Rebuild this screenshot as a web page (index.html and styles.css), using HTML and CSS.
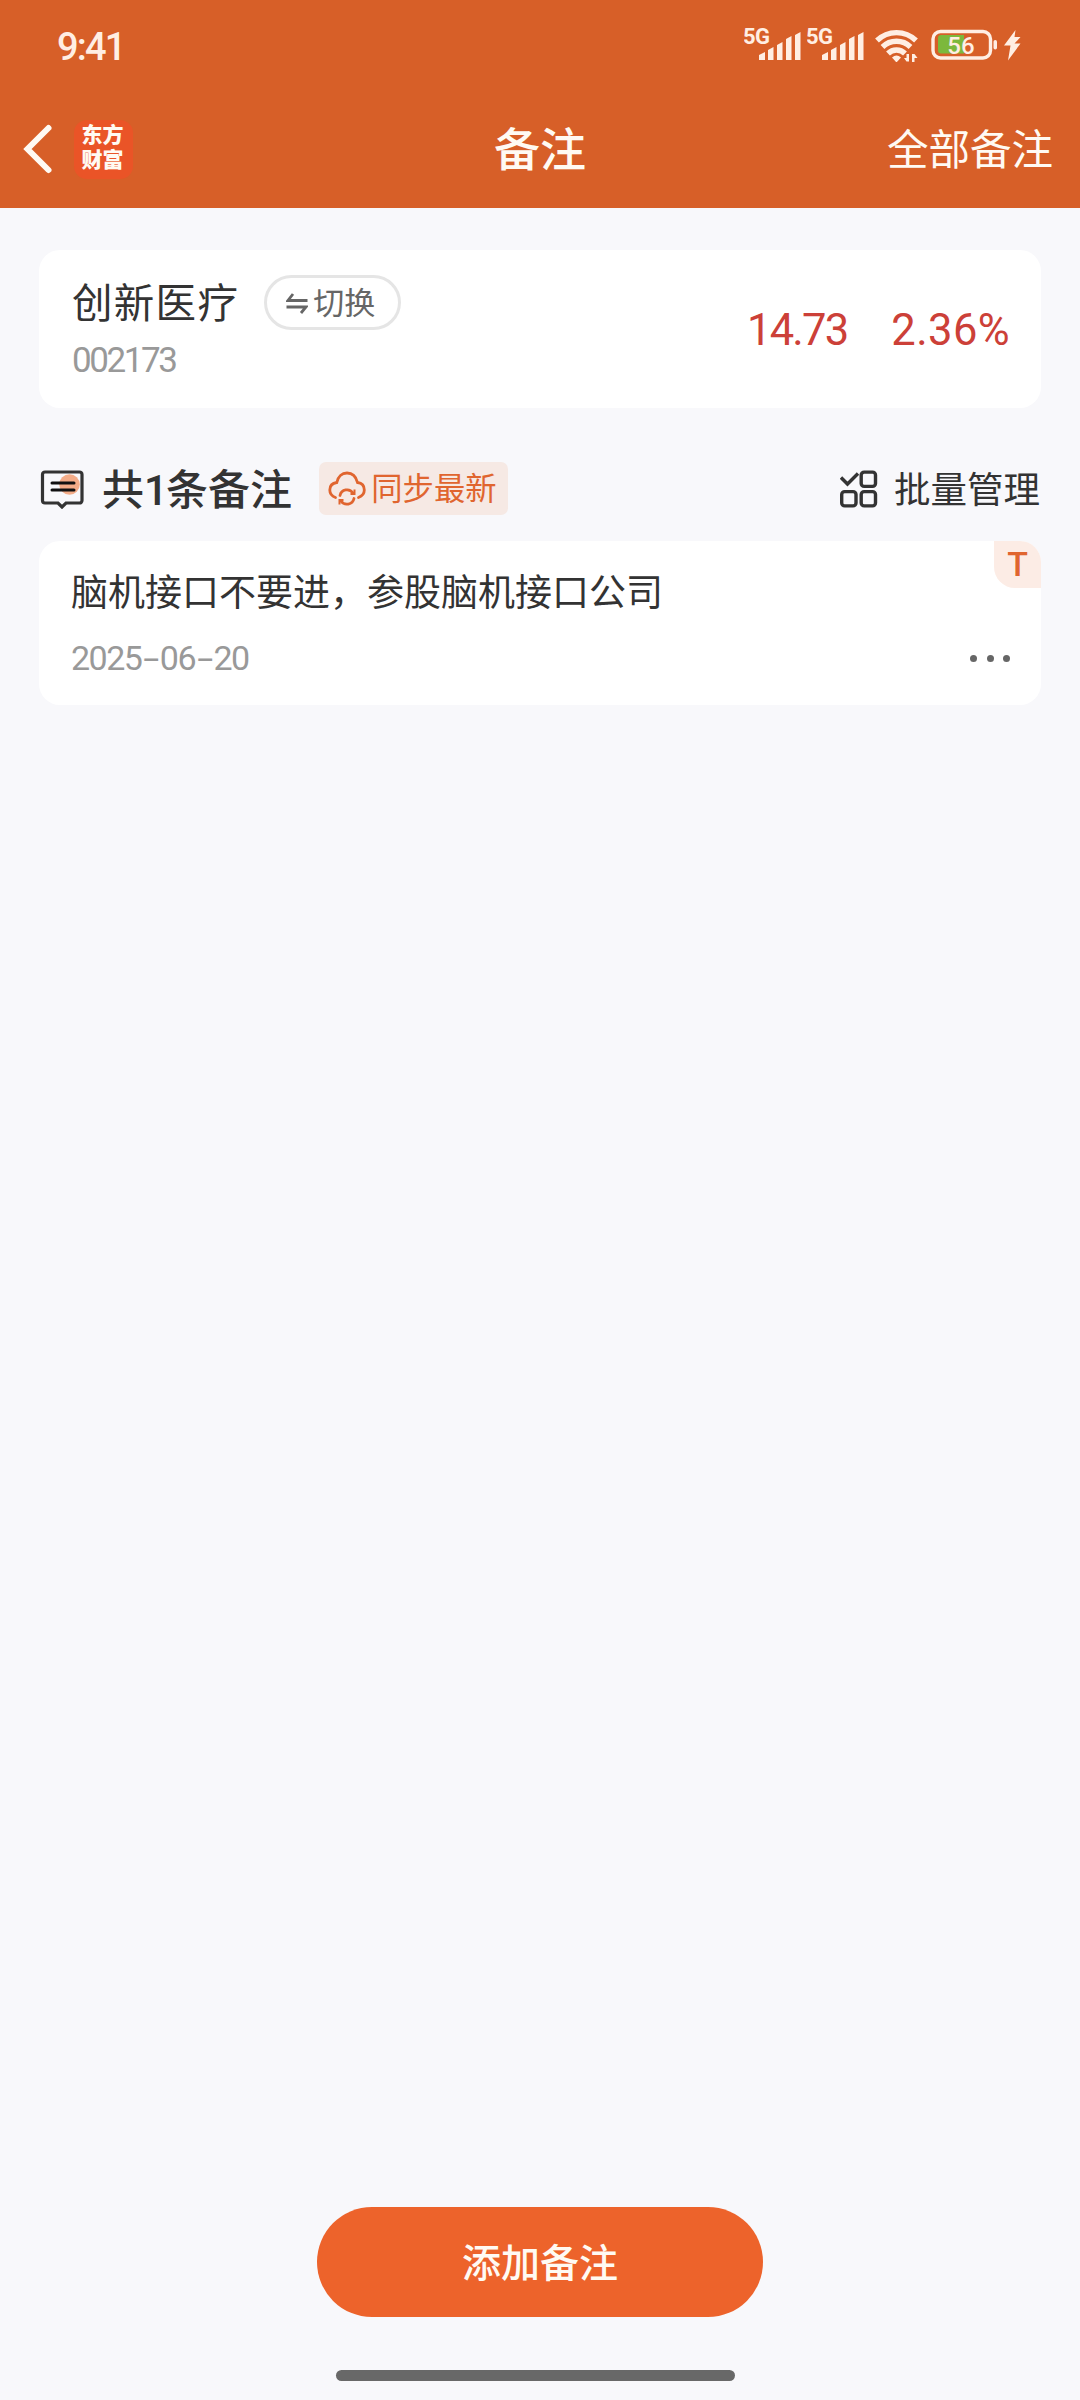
FILE: index.html
```html
<!DOCTYPE html>
<html lang="zh-CN">
<head>
    <meta charset="UTF-8">
    <meta name="viewport" content="width=device-width, initial-scale=1.0">
    <title>备注</title>
    <link rel="stylesheet" href="styles.css">
</head>
<body>
    <header class="header">
        <div class="status-bar">
            <span class="time">9:41</span>
            <div class="status-icons">
                <svg class="signal" width="57" height="36" viewBox="0 0 57 36">
                    <text x="-1" y="20">5G</text>
                    <path d="M15 31l6-3v8h-6zM24 26l5.500-3v13H24zM33 21l5.500-3v18H33zM42 15l5.500-3v24H42zM51 11l5.500-3v28H51z"/>
                </svg>
                <svg class="signal" width="57" height="36" viewBox="0 0 57 36">
                    <text x="-1" y="20">5G</text>
                    <path d="M15 31l6-3v8h-6zM24 26l5.500-3v13H24zM33 21l5.500-3v18H33zM42 15l5.500-3v24H42zM51 11l5.500-3v28H51z"/>
                </svg>
                <svg class="wifi" width="44" height="38" viewBox="0 0 44 38">
                    <g fill="none" stroke="#ffeee3" stroke-width="5.400">
                        <path d="M2 16.500a28 28 0 0 1 39 0"/>
                        <path d="M7.500 23a20 20 0 0 1 28 0"/>
                        <path d="M13 29.500a12 12 0 0 1 17 0"/>
                    </g>
                    <path d="M17 33.500q4.500-4 9 0l-4.500 5z"/>
                    <path d="M34 30v7.500h-2.500L29 34h2.500v-4zM37 38v-8h2.500l3 4H39.500v4z"/>
                </svg>
                <svg class="battery" width="68" height="36" viewBox="0 0 68 36">
                    <rect x="2" y="7.500" width="57.500" height="26.500" rx="7.500" fill="none" stroke="#ffeee3" stroke-width="3.400"/>
                    <path d="M10 11h23v18.500H10a3 3 0 0 1-3-3V14a3 3 0 0 1 3-3z" fill="#7cb83c"/>
                    <rect x="62.500" y="16" width="3.500" height="9.500" rx="1.700"/>
                    <text x="30" y="29.500">56</text>
                </svg>
                <svg class="bolt" width="18" height="37" viewBox="0 0 18 37">
                    <path d="M12.500 6L1 21.500h6.500L5 36.500 17.500 19.500h-6L17.500 13h-6z"/>
                </svg>
            </div>
        </div>
        <nav class="nav-bar">
            <div class="nav-left">
                <svg class="back" width="32" height="52" viewBox="0 0 32 52">
                    <path d="M25.500 5L4.500 26l21 21"/>
                </svg>
                <div class="logo"><span>东方</span><span>财富</span></div>
            </div>
            <h1>备注</h1>
            <a class="all-notes">全部备注</a>
        </nav>
    </header>

    <main class="content">
        <section class="card stock">
            <div>
                <div class="stock-title">
                    <span class="stock-name">创新医疗</span>
                    <button class="switch">
                        <svg width="22" height="24" viewBox="0 0 22 24">
                            <path d="M21.500 9.500H2L7 3M.5 16h19.500L15 22"/>
                        </svg>
                        <span>切换</span>
                    </button>
                </div>
                <div class="stock-code">002173</div>
            </div>
            <div class="quote">
                <span>14.73</span>
                <span>2.36%</span>
            </div>
        </section>

        <div class="toolbar">
            <svg class="note-icon" width="44" height="40" viewBox="0 0 44 40">
                <circle cx="29.500" cy="15.500" r="10.300" fill="#f3ac88"/>
                <path d="M5 3h34.500a2.500 2.500 0 0 1 2.500 2.500v26a2.500 2.500 0 0 1-2.500 2.500H26l-4 4-4-4H5a2.500 2.500 0 0 1-2.500-2.500v-26A2.500 2.500 0 0 1 5 3z" fill="none" stroke="#333" stroke-width="3.200"/>
                <path d="M12 14h22M12 21h22" stroke="#111" stroke-width="3" stroke-linecap="round"/>
            </svg>
            <h2>共<span class="count">1</span>条备注</h2>
            <button class="sync">
                <svg width="38" height="36" viewBox="0 0 38 36" fill="none" stroke="#e0652f" stroke-width="2.800" stroke-linecap="round">
                    <path d="M7.500 26.500C3.500 25 1.800 22 1.800 19c0-4.500 3-7 7-7.500C10 5.500 14 2 19 2s9 3.500 10.500 9.500c4.500.5 6.800 3.500 6.800 7.500 0 3-1.800 6-5.800 7.500"/>
                    <path d="M12 24.500a7.200 7.200 0 0 1 13-2.500M26 27.500a7.200 7.200 0 0 1-13 2.500"/>
                    <path d="M26.500 18.500v4.500h-4M11.500 33.500v-4.500h4" stroke-width="2" stroke-linecap="butt"/>
                </svg>
                <span>同步最新</span>
            </button>
            <div class="batch">
                <svg width="38" height="38" viewBox="0 0 38 38" fill="none" stroke="#333" stroke-width="3.400">
                    <path d="M1 7.500l6.500 6.500L18 3.500"/>
                    <rect x="21.200" y="2.100" width="14.300" height="14.300" rx="3"/>
                    <rect x="1.700" y="21.600" width="14.300" height="14.300" rx="3"/>
                    <rect x="21.200" y="21.600" width="14.300" height="14.300" rx="3"/>
                </svg>
                <span>批量管理</span>
            </div>
        </div>

        <section class="card note">
            <span class="tag">T</span>
            <p>脑机接口不要进，参股脑机接口公司</p>
            <div class="note-footer">
                <span class="date">2025<i>-</i>06<i>-</i>20</span>
                <div class="more"><b></b><b></b><b></b></div>
            </div>
        </section>
    </main>

    <footer class="footer">
        <button class="add">添加备注</button>
        <div class="home-bar"></div>
    </footer>
</body>
</html>
```

FILE: styles.css
```css
* {
    box-sizing: border-box;
}
body {
    margin: 0;
    height: 2400px;
    display: flex;
    flex-direction: column;
    background: #f8f8fb;
    color: #333;
    font-family: Roboto, "Noto Sans CJK SC", sans-serif;
}
h1, h2, p {
    margin: 0;
}
button {
    border: none;
    padding: 0;
    font-family: inherit;
    display: flex;
    align-items: center;
}
svg {
    display: block;
    flex-shrink: 0;
}
.header {
    height: 208px;
    background: #d75f28;
    color: #fffaf3;
}
.status-bar {
    height: 90px;
    padding: 2px 59px 0 57px;
    display: flex;
    justify-content: space-between;
    align-items: center;
    color: #ffeee3;
}
.time {
    padding-top: 1px;
    font-size: 38px;
    font-weight: 500;
    letter-spacing: -1.8px;
}
.status-icons {
    display: flex;
    fill: #ffeee3;
    margin-bottom: 6px;
}
.signal {
    margin-right: 6px;
}
.signal text {
    font-size: 22px;
    font-weight: 700;
    letter-spacing: -0.5px;
}
.wifi {
    margin-left: 5px;
    margin-right: 12px;
}
.battery {
    margin-right: 4px;
}
.battery text {
    font-size: 24px;
    font-weight: 500;
    text-anchor: middle;
}
.nav-bar {
    height: 118px;
    padding: 0 27px;
    display: grid;
    grid-template-columns: 1fr auto 1fr;
    align-items: center;
}
.nav-left {
    margin-left: -4px;
    display: flex;
    align-items: center;
    gap: 19px;
}
.back path {
    fill: none;
    stroke: #fffaf3;
    stroke-width: 6;
    stroke-linecap: round;
}
.logo {
    width: 59px;
    height: 59px;
    border-radius: 13px;
    background: #ea5427;
    display: flex;
    flex-direction: column;
    align-items: center;
    justify-content: center;
    padding: 0 2px 2px 0;
    font-size: 21px;
    font-weight: 900;
    line-height: 25px;
}
.nav-bar h1 {
    padding-bottom: 6px;
    font-size: 46px;
    font-weight: 500;
}
.all-notes {
    padding-bottom: 5px;
    font-size: 41.5px;
    justify-self: end;
}
.content {
    flex: 1;
    padding: 42px 39px 0;
}
.card {
    background: #fff;
    border-radius: 21px;
}
.stock {
    height: 158px;
    padding: 25px 31px 0 33px;
    display: flex;
    justify-content: space-between;
}
.stock-title {
    height: 55px;
    display: flex;
    align-items: center;
    gap: 25px;
}
.stock-name {
    padding-bottom: 5px;
    font-size: 40.5px;
    letter-spacing: 1.3px;
}
.switch {
    width: 137px;
    height: 55px;
    border: 3px solid #e5e5e5;
    border-radius: 28px;
    background: #fff;
    color: #666;
    font-size: 31px;
    justify-content: center;
    padding-right: 4px;
    gap: 5px;
}
.switch span, .sync span {
    padding-bottom: 4px;
}
.switch path {
    fill: none;
    stroke: #666;
    stroke-width: 2.8;
}
.stock-code {
    margin-top: 10px;
    font-size: 35px;
    line-height: 42px;
    letter-spacing: -2.4px;
    color: #999;
}
.quote {
    height: 110px;
    display: flex;
    align-items: center;
    gap: 44px;
    font-size: 43.5px;
    letter-spacing: -1.8px;
    color: #cc4038;
}
.quote span:last-child {
    letter-spacing: 0.4px;
}
.toolbar {
    height: 133px;
    padding-top: 28px;
    display: flex;
    align-items: center;
}
.note-icon {
    margin-left: 1px;
}
.toolbar h2 {
    margin-left: 18px;
    padding-bottom: 5px;
    font-size: 42px;
    font-weight: 500;
    white-space: nowrap;
}
.count {
    margin-right: -2px;
}
.sync {
    margin-left: 27px;
    width: 189px;
    height: 53px;
    border-radius: 7px;
    background: #f6e9e4;
    color: #e0652f;
    font-size: 31.3px;
    justify-content: center;
    padding-right: 2px;
    gap: 5px;
}
.batch {
    margin-left: auto;
    margin-right: 1px;
    display: flex;
    align-items: center;
    gap: 16px;
    font-size: 36.5px;
}
.batch span {
    padding-bottom: 3px;
}
.note {
    position: relative;
    height: 164px;
    padding: 25px 31px 0 32px;
}
.note p {
    font-size: 37px;
    line-height: 56px;
}
.tag {
    position: absolute;
    top: 0;
    right: 0;
    width: 47px;
    height: 47px;
    border-radius: 0 21px 0 21px;
    background: #fcece5;
    color: #e0652f;
    font-size: 34px;
    font-weight: 500;
    line-height: 47px;
    text-align: center;
}
.note-footer {
    margin-top: 15px;
    display: flex;
    justify-content: space-between;
    align-items: center;
}
.date {
    font-size: 34px;
    line-height: 42px;
    letter-spacing: -1.5px;
    color: #999;
}
.date i {
    display: inline-block;
    font-style: normal;
    margin: 0 5.5px 0 5px;
    transform: scaleX(1.7);
}
.more {
    display: flex;
    gap: 9.5px;
}
.more b {
    width: 7px;
    height: 7px;
    border-radius: 50%;
    background: #666;
}
.footer {
    height: 193px;
    display: flex;
    flex-direction: column;
    align-items: center;
}
.add {
    width: 446px;
    height: 110px;
    border-radius: 55px;
    background: #ed632b;
    color: #fffaf3;
    padding-bottom: 4px;
    font-size: 39px;
    font-weight: 500;
    justify-content: center;
}
.home-bar {
    width: 399px;
    height: 11px;
    margin: 53px 9px 0 0;
    border-radius: 6px;
    background: #686868;
}
```
